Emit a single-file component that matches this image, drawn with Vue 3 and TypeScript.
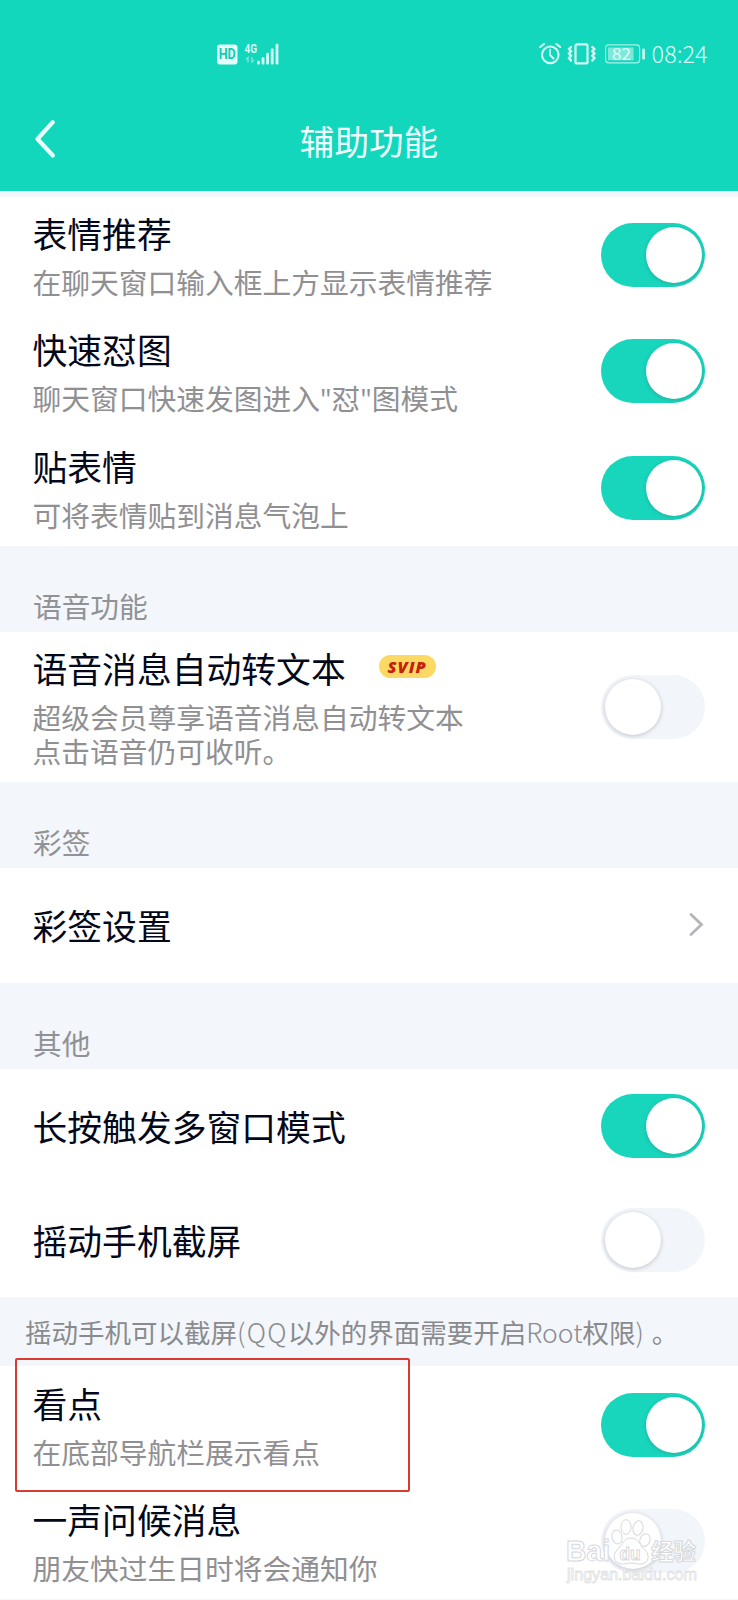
<script setup lang="ts">
interface Row {
  title: string
  desc?: string[]
  kind: 'switch' | 'link'
  on?: boolean
  badge?: string
  marked?: boolean
}

interface NotePart {
  text: string
  style?: 'latin-wide' | 'latin' | 'stop'
}

interface Section {
  heading?: string
  note?: NotePart[]
  rows: Row[]
}

const sections: Section[] = [
  {
    rows: [
      { title: '表情推荐', desc: ['在聊天窗口输入框上方显示表情推荐'], kind: 'switch', on: true },
      { title: '快速怼图', desc: ['聊天窗口快速发图进入"怼"图模式'], kind: 'switch', on: true },
      { title: '贴表情', desc: ['可将表情贴到消息气泡上'], kind: 'switch', on: true },
    ],
  },
  {
    heading: '语音功能',
    rows: [
      {
        title: '语音消息自动转文本',
        desc: ['超级会员尊享语音消息自动转文本', '点击语音仍可收听。'],
        kind: 'switch',
        on: false,
        badge: 'SVIP',
      },
    ],
  },
  { heading: '彩签', rows: [{ title: '彩签设置', kind: 'link' }] },
  {
    heading: '其他',
    rows: [
      { title: '长按触发多窗口模式', kind: 'switch', on: true },
      { title: '摇动手机截屏', kind: 'switch', on: false },
    ],
  },
  {
    note: [
      { text: '摇动手机可以截屏' },
      { text: '(QQ', style: 'latin-wide' },
      { text: '以外的界面需要开启' },
      { text: 'Root', style: 'latin' },
      { text: '权限' },
      { text: ')', style: 'latin' },
      { text: '。', style: 'stop' },
    ],
    rows: [
      { title: '看点', desc: ['在底部导航栏展示看点'], kind: 'switch', on: true, marked: true },
      { title: '一声问候消息', desc: ['朋友快过生日时将会通知你'], kind: 'switch', on: false },
    ],
  },
]
</script>

<template>
  <div class="screen">
    <header class="top">
      <div class="status">
        <svg class="status-left" width="66" height="26" viewBox="0 0 66 26">
          <rect x="1" y="3.5" width="20.5" height="20" rx="3" fill="#e6fffb" />
          <text x="11.2" y="18" class="hd" text-anchor="middle" textLength="17" lengthAdjust="spacingAndGlyphs">HD</text>
          <text x="28.5" y="12" class="net" textLength="12.5" lengthAdjust="spacingAndGlyphs">4G</text>
          <g stroke="#7fe9d9" stroke-width="1.3" fill="none">
            <path d="M32 21.500v-5l-2 2M36 16v5l2-2" />
          </g>
          <g fill="#d5fbf5">
            <rect x="41" y="19.8" width="2.8" height="3.8" rx="1" />
            <rect x="45.6" y="16.3" width="2.8" height="7.3" rx="1" />
            <rect x="50.2" y="11.8" width="2.8" height="11.8" rx="1" />
            <rect x="54.8" y="7.4" width="2.8" height="16.2" rx="1" />
            <rect x="59.6" y="2.8" width="2.8" height="20.8" rx="1" />
          </g>
        </svg>
        <svg class="status-right" width="176" height="38" viewBox="0 -4 176 38">
          <g fill="none" stroke="#d5fbf5" stroke-linecap="round">
            <circle cx="12.3" cy="13.8" r="8.3" stroke-width="2.1" />
            <path d="M12 8.800v5.200l3.600 3.600" stroke-width="1.9" />
            <path d="M2.200 6 6 2.900M18.400 2.900l3.800 3.100" stroke-width="2" />
            <rect x="37.5" y="3.4" width="12" height="19" rx="1.5" stroke-width="2.2" />
            <path
              d="M33 6l-2 2 2 2.300-2 2.200 2 2.300-2 2.200 2 2.500M54.400 6l2 2-2 2.300 2 2.200-2 2.300 2 2.200-2 2.500"
              stroke-width="2.4"
            />
            <rect x="67.6" y="3.800" width="34" height="18" rx="3" stroke="#a8f2e7" stroke-width="1.2" />
          </g>
          <rect x="70" y="6.500" width="25.500" height="12.800" fill="#7fe8d9" />
          <rect x="104.300" y="7.400" width="2.600" height="11" rx="1" fill="#d5fbf5" />
          <text x="74" y="18.600" class="battery" textLength="19" lengthAdjust="spacingAndGlyphs">82</text>
          <text x="113.600" y="21.600" class="clock" textLength="56" lengthAdjust="spacingAndGlyphs">08:24</text>
        </svg>
      </div>
      <nav class="nav">
        <svg class="back" width="22" height="40" viewBox="0 0 22 40">
          <path d="M18.800 3.200 3.500 20l15.300 16.500" fill="none" stroke="#e9fffc" stroke-width="4.200" stroke-linecap="round" stroke-linejoin="round" />
        </svg>
        <h1>辅助功能</h1>
        <span class="nav-end"></span>
      </nav>
    </header>

    <section v-for="(section, i) in sections" :key="i" class="section">
      <div v-if="section.heading" class="heading">{{ section.heading }}</div>
      <div v-if="section.note" class="note"><span v-for="(part, n) in section.note" :key="n" :class="part.style">{{ part.text }}</span></div>
      <div class="rows">
        <div
          v-for="row in section.rows"
          :key="row.title"
          class="row"
          :class="{ simple: !row.desc, link: row.kind === 'link' }"
        >
          <div class="body">
            <div class="title">
              <span>{{ row.title }}</span>
              <span v-if="row.badge" class="badge">{{ row.badge }}</span>
            </div>
            <p v-for="line in row.desc ?? []" :key="line" class="desc">{{ line }}</p>
          </div>
          <span v-if="row.kind === 'switch'" class="switch" :class="{ on: row.on }"><i></i></span>
          <svg v-else class="arrow" width="18" height="26" viewBox="0 0 18 26">
            <path d="M4 2.500l10.500 10L4 22.500" fill="none" stroke="#b3b5ba" stroke-width="2.800" stroke-linecap="round" />
          </svg>
          <span v-if="row.marked" class="mark"></span>
        </div>
      </div>
    </section>

    <svg class="watermark" width="150" height="72" viewBox="0 0 150 72">
      <g fill="#fff" stroke="#d6d8dc" stroke-width="1">
        <text x="6" y="43" class="wm-bold" textLength="44" lengthAdjust="spacingAndGlyphs">Bai</text>
        <text x="91" y="42" class="wm-cjk" textLength="45" lengthAdjust="spacingAndGlyphs">经验</text>
        <ellipse cx="57" cy="19" rx="5" ry="7" transform="rotate(-12 57 19)" />
        <ellipse cx="66" cy="9" rx="5" ry="7.300" />
        <ellipse cx="78" cy="10" rx="5" ry="7.300" transform="rotate(10 78 10)" />
        <ellipse cx="85" cy="22" rx="5" ry="6.500" transform="rotate(20 85 22)" />
        <path d="M71 20c-8 0-9 8-14 12-5 5-3 13 4 14 4 .5 6-1 10-1s7 1.500 11 1c7-1 8-9 3-14-5-4-6-12-14-12z" />
        <text x="59.500" y="42" class="wm-du" textLength="21" lengthAdjust="spacingAndGlyphs">du</text>
      </g>
      <text x="7" y="62" class="wm-url" textLength="130" lengthAdjust="spacingAndGlyphs">jingyan.baidu.com</text>
    </svg>
  </div>
</template>

<style>
html,
body {
  margin: 0;
  background: #fff;
}
</style>

<style scoped>
.screen {
  position: relative;
  width: 738px;
  height: 1600px;
  overflow: hidden;
  background: #f3f6fa;
  color: #03081a;
  font-family: 'Noto Sans CJK SC', 'Noto Sans', sans-serif;
}

.top {
  height: 191px;
  margin-bottom: 6px;
  background: #12d7bd;
}

.status {
  box-sizing: border-box;
  display: flex;
  justify-content: space-between;
  height: 90px;
  padding: 41px 24px 0 216px;
}

.status-right {
  margin-top: -4px;
}

.hd {
  font: 700 14px Roboto, sans-serif;
  fill: #12cdb4;
}

.net {
  font: 700 12.5px Roboto, sans-serif;
  fill: #d5fbf5;
}

.battery {
  font: 400 16px 'Noto Sans CJK SC', sans-serif;
  fill: #dcfdf8;
}

.clock {
  font: 300 24px 'Noto Sans CJK SC', sans-serif;
  fill: #d9fcf7;
}

.nav {
  display: flex;
  align-items: center;
  justify-content: space-between;
  height: 98px;
  padding: 0 34px;
}

.nav h1 {
  margin: 1px 0 0;
  color: #effffd;
  font-size: 34.6px;
  font-weight: 400;
  line-height: 44px;
}

.nav-end {
  width: 22px;
}

.heading {
  box-sizing: border-box;
  height: 86px;
  padding: 39px 0 0 33px;
  color: #919296;
  font-size: 28.7px;
  line-height: 42px;
}

.note {
  height: 69px;
  padding-left: 25px;
  color: #8a8b8f;
  font-size: 26.5px;
  line-height: 70px;
  white-space: nowrap;
}

.latin-wide {
  font-weight: 300;
  letter-spacing: 1.3px;
}

.latin {
  font-weight: 300;
}

.stop {
  margin-left: 8px;
}

.rows {
  background: #fff;
}

.row {
  position: relative;
  box-sizing: border-box;
  display: flex;
  align-items: center;
  justify-content: space-between;
  min-height: 116.3px;
  padding: 0 33px 0 32.5px;
}

.row.simple {
  min-height: 114.3px;
}

.row.simple.link {
  min-height: 115px;
}

.body {
  padding: 13px 0 14px;
}

.simple .body {
  padding: 0;
}

.title {
  display: flex;
  align-items: center;
  height: 46px;
  font-size: 34.8px;
  line-height: 46px;
  white-space: nowrap;
}

.title + .desc {
  margin-top: 9px;
}

.desc {
  position: relative;
  top: 1px;
  margin: 0;
  color: #909093;
  font-family: 'Open Sans', 'Noto Sans CJK SC', sans-serif;
  font-size: 28.75px;
  line-height: 34px;
  white-space: nowrap;
}

.badge {
  width: 57px;
  height: 23px;
  margin: -3px 0 0 33px;
  border-radius: 12px;
  background: #fbd964;
  color: #c4200b;
  font: italic 800 16.5px/23px 'Open Sans', sans-serif;
  letter-spacing: 1px;
  text-align: center;
}

.switch {
  box-sizing: border-box;
  flex: none;
  width: 104px;
  height: 64px;
  padding: 4px;
  border-radius: 32px;
  background: #f2f5f9;
}

.switch i {
  display: block;
  width: 56px;
  height: 56px;
  border-radius: 50%;
  background: #fff;
  box-shadow: 0 1px 4px rgba(60, 70, 90, 0.28);
}

.switch.on {
  background: #18d6bc;
}

.switch.on i {
  margin-left: 40.5px;
}

.arrow {
  flex: none;
}

.mark {
  position: absolute;
  top: -8px;
  left: 15px;
  box-sizing: border-box;
  width: 395px;
  height: 134px;
  border: 2px solid #da3a30;
  border-radius: 2px;
}

.watermark {
  position: absolute;
  left: 560px;
  top: 1518px;
}

.wm-bold {
  font: 700 29px 'Liberation Sans', sans-serif;
}

.wm-cjk {
  font: 700 23px 'Noto Sans CJK SC', sans-serif;
}

.wm-du {
  font: 700 19px 'Liberation Sans', sans-serif;
}

.wm-url {
  font: 400 16px 'Liberation Sans', sans-serif;
  fill: #fff;
  stroke: #dfe1e4;
  stroke-width: 0.8px;
}
</style>
